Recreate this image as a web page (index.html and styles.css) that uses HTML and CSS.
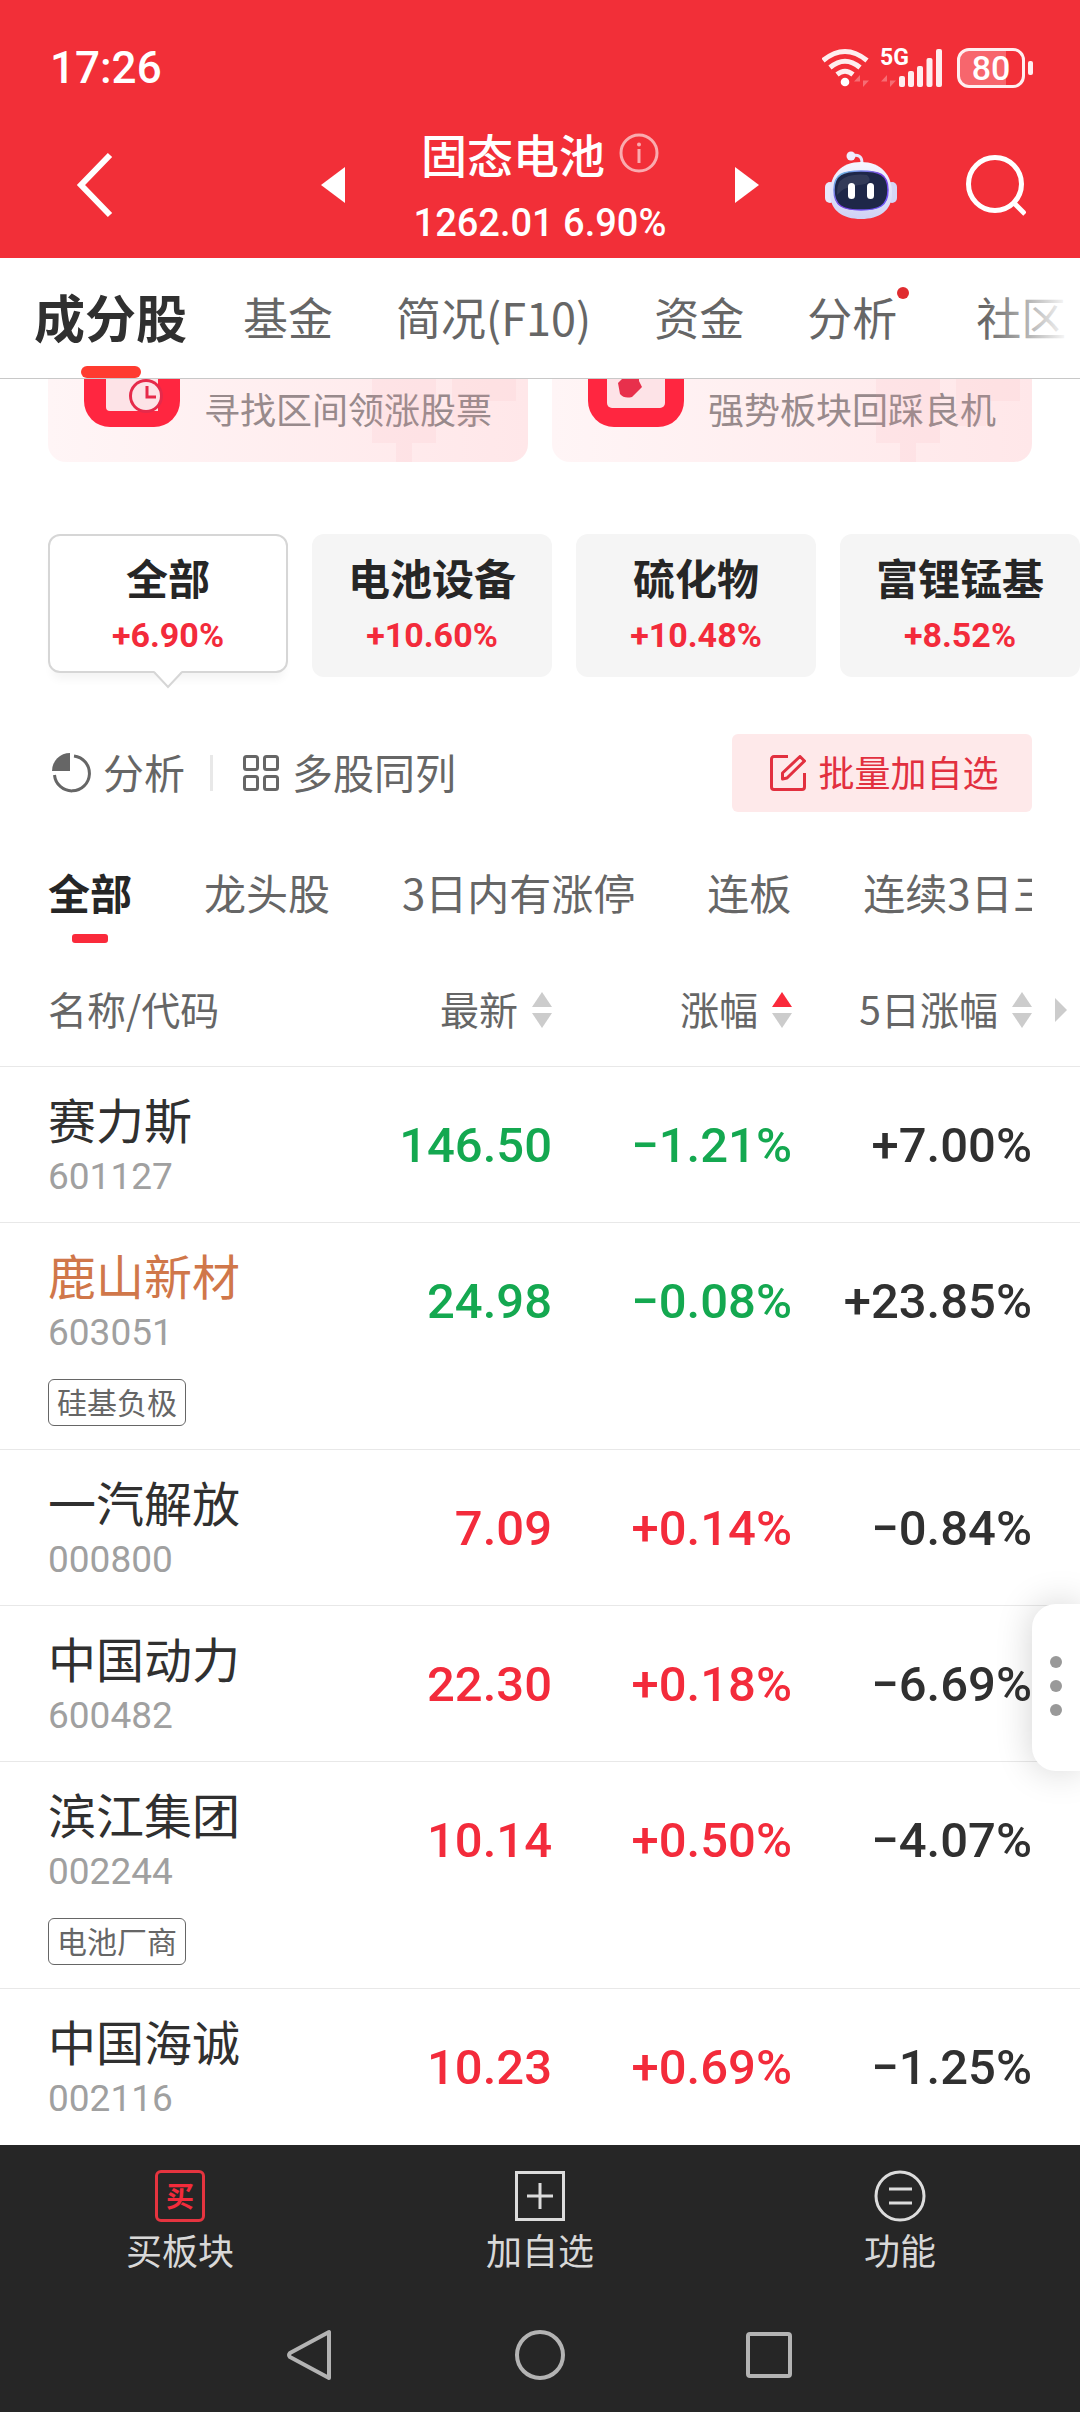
FILE: index.html
```html
<!DOCTYPE html>
<html lang="zh-CN">
<head>
<meta charset="utf-8">
<meta name="viewport" content="width=device-width, initial-scale=1">
<title>固态电池</title>
<link rel="stylesheet" href="styles.css">
</head>
<body>
<header class="top">
  <div class="status">
    <span class="status-time">17:26</span>
    <div class="status-icons">
      <svg width="48" height="40" viewBox="0 0 48 40" fill="none" stroke="#fff" stroke-opacity=".92" stroke-width="5">
        <path d="M1 12.500Q23 -5.500 45 12.500M8 19.500Q23 7 38 19.500M15 26.500Q23 20 31 26.500"/>
        <circle cx="23" cy="34" r="4.300" fill="#fff" stroke="none"/>
        <path d="M38 39V27L32 33.500h6zM41 27v12l6-6.500h-6z" fill="#fff" fill-opacity=".3" stroke="none"/>
      </svg>
      <div class="signal">
        <span class="signal-label">5G</span>
        <svg width="62" height="40" viewBox="0 0 62 40" fill="#fff" fill-opacity=".92">
          <rect x="19" y="28" width="6" height="11" rx="2"/><rect x="28" y="23" width="6" height="16" rx="2"/><rect x="37" y="18" width="6" height="21" rx="2"/><rect x="46.500" y="10" width="6" height="29" rx="2"/><rect x="56" y="1" width="6" height="38" rx="2"/>
          <path d="M7 39V27L1 33.500h6zM10 27v12l6-6.500h-6z" fill-opacity=".3"/>
        </svg>
      </div>
      <div class="battery"><span class="battery-level">80</span></div>
    </div>
  </div>
  <nav class="nav">
    <button class="icon-btn nav-back" aria-label="返回">
      <svg width="38" height="66" viewBox="0 0 38 66" fill="none" stroke="#fff" stroke-width="6"><path d="M34 3L5 33l29 30"/></svg>
    </button>
    <div class="nav-center">
      <button class="icon-btn" aria-label="上一个"><svg width="24" height="36" viewBox="0 0 24 36"><path d="M24 0v36L0 18z" fill="#fff"/></svg></button>
      <div class="nav-title">
        <h1 class="title">固态电池
          <svg width="40" height="40" viewBox="0 0 40 40" fill="none" stroke="#fff" stroke-opacity=".6" stroke-width="3"><circle cx="20" cy="20" r="18"/><path d="M20 16v14"/><circle cx="20" cy="11.500" r="2" fill="#fff" fill-opacity=".6" stroke="none"/></svg>
        </h1>
        <p class="quote">1262.01 6.90%</p>
      </div>
      <button class="icon-btn" aria-label="下一个"><svg width="24" height="36" viewBox="0 0 24 36"><path d="M0 0v36l24-18z" fill="#fff"/></svg></button>
    </div>
    <div class="nav-actions">
      <button class="icon-btn" aria-label="智能助手">
        <svg width="72" height="68" viewBox="0 0 72 68">
          <defs>
            <linearGradient id="shell" x1="0" y1="0" x2="0" y2="1"><stop offset="0" stop-color="#f6f5ff"/><stop offset="1" stop-color="#cfd2f4"/></linearGradient>
            <linearGradient id="rim" x1="0" y1="0" x2="1" y2="1"><stop offset="0" stop-color="#6fd0e8"/><stop offset=".5" stop-color="#7a3fe0"/><stop offset="1" stop-color="#6a5cff"/></linearGradient>
          </defs>
          <path d="M26 5q11-3 11 7" fill="none" stroke="#e9e6fb" stroke-width="3"/>
          <circle cx="26" cy="5" r="4.500" fill="#f0edff"/>
          <rect x="0" y="31" width="10" height="21" rx="5" fill="#e9e8fb"/><rect x="62" y="31" width="10" height="21" rx="5" fill="#d5d6f6"/>
          <path d="M36 11C56 11 67 24 67 42C67 60 54 68 36 68S5 60 5 42C5 24 16 11 36 11z" fill="url(#shell)"/>
          <path d="M36 20C54 20 63 23 63 39S54 59 36 59S9 55 9 39S18 20 36 20z" fill="#1e2748" stroke="url(#rim)" stroke-width="1.500"/>
          <path d="M15 30Q24 22 42 24Q50 32 34 34T12 44Q12 34 15 30z" fill="#fff" fill-opacity=".09"/>
          <rect x="23" y="32" width="7" height="16" rx="3.500" fill="#fff"/><rect x="42" y="32" width="7" height="16" rx="3.500" fill="#fff"/>
        </svg>
      </button>
      <button class="icon-btn" aria-label="搜索">
        <svg width="60" height="62" viewBox="0 0 60 62" fill="none" stroke="#fff" stroke-width="5"><circle cx="29" cy="30" r="26.500"/><path d="M48 49l11 11"/></svg>
      </button>
    </div>
  </nav>
</header>

<nav class="tabs">
  <a class="tab tab-active" href="#stocks">成分股</a>
  <a class="tab" href="#funds">基金</a>
  <a class="tab" href="#profile">简况(F10)</a>
  <a class="tab" href="#capital">资金</a>
  <a class="tab tab-dot" href="#analysis">分析</a>
  <a class="tab" href="#community">社区</a>
</nav>

<main class="content" id="stocks">
  <div class="features">
    <a class="feature" href="#range">
      <svg class="feature-bg" width="150" height="83" viewBox="0 0 150 83" fill="#f8a0aa" fill-opacity=".09"><path d="M0 0h64v64H40v20H24V64H0zM80 0h64v22h-34v25H80z"/></svg>
      <svg width="96" height="48" viewBox="0 0 96 48">
        <path d="M0 0h96v22a26 26 0 0 1-26 26H26A26 26 0 0 1 0 22z" fill="#ff2640"/>
        <path d="M22 0h52v32H26a4 4 0 0 1-4-4z" fill="#fde3e7"/>
        <path d="M74 0h22v22H74z" fill="#ff2640"/>
        <circle cx="62" cy="17" r="17" fill="#e62a4a"/><circle cx="62" cy="17" r="14" fill="#fde3e7"/>
        <path d="M63 7v11h9" fill="none" stroke="#e62a4a" stroke-width="3"/>
      </svg>
      <span>寻找区间领涨股票</span>
    </a>
    <a class="feature" href="#pullback">
      <svg class="feature-bg" width="150" height="83" viewBox="0 0 150 83" fill="#f8a0aa" fill-opacity=".09"><path d="M0 0h64v64H40v20H24V64H0zM80 0h64v22h-34v25H80z"/></svg>
      <svg width="96" height="48" viewBox="0 0 96 48">
        <path d="M0 0h96v22a26 26 0 0 1-26 26H26A26 26 0 0 1 0 22z" fill="#ff2640"/>
        <path d="M19 0h58v24a5 5 0 0 1-5 5H24a5 5 0 0 1-5-5z" fill="#fde3e7"/>
        <path d="M34 0h17v2l3 6-10 10q-8 2-12-3l-2-11z" fill="#e8304c"/>
      </svg>
      <span>强势板块回踩良机</span>
    </a>
  </div>

  <div class="chips">
    <button class="chip chip-active"><span class="chip-name">全部</span><span class="chip-rate">+6.90%</span>
      <svg class="chip-arrow" width="30" height="18" viewBox="0 0 30 18"><path d="M1 0h28L15 15z" fill="#fff"/><path d="M1 1L15 16L29 1" fill="none" stroke="#d6d6d6" stroke-width="2"/></svg>
    </button>
    <button class="chip"><span class="chip-name">电池设备</span><span class="chip-rate">+10.60%</span></button>
    <button class="chip"><span class="chip-name">硫化物</span><span class="chip-rate">+10.48%</span></button>
    <button class="chip"><span class="chip-name">富锂锰基</span><span class="chip-rate">+8.52%</span></button>
  </div>

  <div class="tools">
    <button class="tool">
      <svg width="40" height="40" viewBox="0 0 40 40"><path d="M18 0v18H0A18 18 0 0 1 18 0z" fill="#666"/><path d="M22 3A17.500 17.500 0 1 1 2.500 22" fill="none" stroke="#666" stroke-width="3"/></svg>
      <span class="tool-label">分析</span>
    </button>
    <span class="tool-divider"></span>
    <button class="tool tool-wide">
      <svg width="36" height="36" viewBox="0 0 36 36" fill="none" stroke="#666" stroke-width="3"><rect x="1.500" y="1.500" width="13" height="13" rx="2"/><rect x="21.500" y="1.500" width="13" height="13" rx="2"/><rect x="1.500" y="21.500" width="13" height="13" rx="2"/><rect x="21.500" y="21.500" width="13" height="13" rx="2"/></svg>
      <span class="tool-label">多股同列</span>
    </button>
    <button class="batch">
      <svg width="36" height="36" viewBox="0 0 36 36" fill="none" stroke="#e2303f" stroke-width="3" stroke-linejoin="round"><path d="M18 1.500H4a2.500 2.500 0 0 0-2.500 2.500v28a2.500 2.500 0 0 0 2.500 2.500h28a2.500 2.500 0 0 0 2.500-2.500V18"/><path d="M12.500 24v-6L30 1.500l4.500 4.500L17 23z"/></svg>
      <span class="tool-label">批量加自选</span>
    </button>
  </div>

  <nav class="filters">
    <a class="filter filter-active" href="#all">全部</a>
    <a class="filter" href="#leader">龙头股</a>
    <a class="filter" href="#limit3">3日内有涨停</a>
    <a class="filter" href="#streak">连板</a>
    <a class="filter" href="#three">连续3日三</a>
  </nav>

  <table class="stocks">
    <colgroup><col><col class="col-price"><col class="col-price"><col class="col-last"></colgroup>
    <thead>
      <tr>
        <th scope="col">名称/代码</th>
        <th scope="col"><button class="sort">最新<svg width="20" height="36" viewBox="0 0 20 36" fill="#ccc"><path d="M10 0l10 15H0z"/><path d="M10 36L0 21h20z"/></svg></button></th>
        <th scope="col"><button class="sort">涨幅<svg width="20" height="36" viewBox="0 0 20 36" fill="#ccc"><path d="M10 0l10 15H0z" fill="#fa2a3b"/><path d="M10 36L0 21h20z"/></svg></button></th>
        <th scope="col"><button class="sort">5日涨幅<svg width="20" height="36" viewBox="0 0 20 36" fill="#ccc"><path d="M10 0l10 15H0z"/><path d="M10 36L0 21h20z"/></svg></button><svg class="more" width="12" height="24" viewBox="0 0 12 24"><path d="M0 0v24l12-12z" fill="#ccc"/></svg></th>
      </tr>
    </thead>
    <tbody>
      <tr><td><div class="name">赛力斯</div><div class="code">601127</div></td><td class="down">146.50</td><td class="down">−1.21%</td><td>+7.00%</td></tr>
      <tr><td><div class="name name-held">鹿山新材</div><div class="code">603051</div><span class="tag">硅基负极</span></td><td class="down">24.98</td><td class="down">−0.08%</td><td>+23.85%</td></tr>
      <tr><td><div class="name">一汽解放</div><div class="code">000800</div></td><td class="up">7.09</td><td class="up">+0.14%</td><td>−0.84%</td></tr>
      <tr><td><div class="name">中国动力</div><div class="code">600482</div></td><td class="up">22.30</td><td class="up">+0.18%</td><td>−6.69%</td></tr>
      <tr><td><div class="name">滨江集团</div><div class="code">002244</div><span class="tag">电池厂商</span></td><td class="up">10.14</td><td class="up">+0.50%</td><td>−4.07%</td></tr>
      <tr><td><div class="name">中国海诚</div><div class="code">002116</div></td><td class="up">10.23</td><td class="up">+0.69%</td><td>−1.25%</td></tr>
    </tbody>
  </table>
</main>

<button class="drawer" aria-label="更多"><i></i><i></i><i></i></button>

<footer class="bottom">
  <nav class="actions">
    <button class="action"><span class="buy-icon">买</span>买板块</button>
    <button class="action"><svg width="52" height="52" viewBox="0 0 52 52" fill="none" stroke="#dcdcdc" stroke-width="3"><path d="M2.500 2.500h47v47h-47zM26 13v26M13 26h26"/></svg>加自选</button>
    <button class="action"><svg width="52" height="52" viewBox="0 0 52 52" fill="none" stroke="#dcdcdc" stroke-width="3"><circle cx="26" cy="26" r="24"/><path d="M15 19h23M15 33h23"/></svg>功能</button>
  </nav>
  <nav class="system">
    <button class="icon-btn" aria-label="后退"><svg width="50" height="52" viewBox="0 0 50 52" fill="none" stroke="#b3b3b3" stroke-width="4" stroke-linejoin="round"><path d="M43 3v46L4 28q-2-2 0-4z"/></svg></button>
    <button class="icon-btn" aria-label="主页"><svg width="52" height="52" viewBox="0 0 52 52" fill="none" stroke="#b3b3b3" stroke-width="4"><circle cx="26" cy="26" r="23"/></svg></button>
    <button class="icon-btn" aria-label="最近任务"><svg width="50" height="52" viewBox="0 0 50 52" fill="none" stroke="#b3b3b3" stroke-width="4"><rect x="4" y="5" width="42" height="42" rx="2"/></svg></button>
  </nav>
</footer>
</body>
</html>
```

FILE: styles.css
```css
:root {
  --cjk: "Noto Sans CJK SC", sans-serif;
  --num: Roboto, "Noto Sans CJK SC", sans-serif;
  --red: #f22f38;
  --up: #f32b3b;
  --down: #14a850;
  --ink: #303030;
  --gray: #666;
}

* { box-sizing: border-box; }

body {
  margin: 0;
  min-height: 100vh;
  display: flex;
  flex-direction: column;
  background: #fff;
  color: var(--ink);
  font-family: var(--cjk);
  overflow-x: hidden;
}

button {
  margin: 0;
  padding: 0;
  border: 0;
  background: none;
  color: inherit;
  font: inherit;
}

a { color: inherit; text-decoration: none; }
svg { display: block; flex: none; }
.icon-btn { display: flex; }

/* Header */
.top { background: var(--red); color: #fff; }

.status {
  display: flex;
  justify-content: space-between;
  align-items: center;
  height: 120px;
  padding: 15px 47px 0 50px;
}

.status-time { font: 500 44px/48px var(--num); }
.status-icons { display: flex; align-items: center; gap: 10px; }
.signal { position: relative; }

.signal-label {
  position: absolute;
  left: 0;
  top: 0;
  font: 700 23px/20px var(--num);
}

.battery {
  position: relative;
  display: flex;
  justify-content: center;
  align-items: center;
  width: 68px;
  height: 40px;
  margin: 0 8px 0 5px;
  border: 3px solid #ffeff0;
  border-radius: 12px;
  background: linear-gradient(to right, #f7666d 75%, transparent 75%);
}

.battery::after {
  content: "";
  position: absolute;
  right: -11px;
  top: 10px;
  width: 5px;
  height: 14px;
  border-radius: 2px;
  background: #ffeff0;
}

.battery-level { font: 500 34px/34px var(--num); }

.nav {
  display: grid;
  grid-template-columns: 1fr auto 1fr;
  align-items: center;
  height: 138px;
  padding: 0 54px 8px;
}

.nav-back { margin-left: 22px; }

.nav-center {
  display: flex;
  align-items: center;
  justify-content: space-between;
  width: 438px;
}

.nav-title { display: flex; flex-direction: column; align-items: center; gap: 20px; }

.title {
  display: flex;
  align-items: center;
  gap: 14px;
  margin: 0;
  font-size: 46px;
  font-weight: 500;
  line-height: 56px;
}

.quote { margin: 0; font: 500 38px/44px var(--num); }
.nav-actions { display: flex; justify-content: flex-end; align-items: center; gap: 69px; }

/* Main tabs */
.tabs {
  display: flex;
  gap: 63px;
  height: 121px;
  padding: 0 36px 0 34px;
  border-bottom: 1px solid #c8c8c8;
  overflow: hidden;
  position: relative;
}

.tabs::after {
  content: "";
  position: absolute;
  right: 0;
  top: 0;
  bottom: 0;
  width: 96px;
  background: linear-gradient(to right, transparent, #fff 90%);
}

.tab {
  position: relative;
  flex: none;
  color: var(--gray);
  font-size: 45px;
  line-height: 117px;
}

.tab-active { margin-right: -7px; color: var(--ink); font-size: 51px; font-weight: 700; }

.tab-active::after {
  content: "";
  position: absolute;
  left: 50%;
  bottom: 0;
  width: 60px;
  height: 12px;
  margin-left: -30px;
  border-radius: 6px;
  background: #ff3b30;
}

.tab-dot { margin-right: 16px; }

.tab-dot::after {
  content: "";
  position: absolute;
  right: -12px;
  top: 29px;
  width: 12px;
  height: 12px;
  border-radius: 50%;
  background: #e02c30;
}

.content { flex: 1; }

/* Feature cards */
.features { display: grid; grid-template-columns: 1fr 1fr; gap: 24px; padding: 0 48px; }

.feature {
  position: relative;
  display: flex;
  gap: 24px;
  height: 83px;
  padding-left: 36px;
  border-radius: 0 0 18px 18px;
  background: linear-gradient(to right, #fff5f6, #ffe7e9);
  color: #988a8c;
  font-size: 36px;
  line-height: 58px;
}

.feature-bg { position: absolute; right: 6px; top: 0; }

/* Sector chips */
.chips { display: flex; gap: 24px; padding: 72px 0 18px 48px; overflow: hidden; }

.chip {
  position: relative;
  flex: none;
  display: flex;
  flex-direction: column;
  align-items: center;
  gap: 5px;
  width: 240px;
  height: 143px;
  padding-top: 13px;
  border-radius: 12px;
  background: #f5f5f5;
}

.chip-active {
  height: 139px;
  padding-top: 11px;
  border: 2px solid #d6d6d6;
  background: #fff;
  box-shadow: 0 10px 10px -4px #f4f4f4;
}

.chip-arrow { position: absolute; left: 50%; bottom: -18px; margin-left: -15px; }
.chip-name { font-size: 42px; font-weight: 700; line-height: 60px; color: #262626; }
.chip-rate { font: 700 34px/46px var(--num); color: var(--up); }

/* Tools */
.tools { display: flex; align-items: center; padding: 39px 48px 0 52px; color: var(--gray); }
.tool { display: flex; align-items: center; gap: 11px; font-size: 41px; line-height: 60px; }
.tool-wide { gap: 13px; }
.tool-label { padding-bottom: 5px; }
.tool-divider { width: 3px; height: 36px; margin: 0 30px 0 25px; background: #e8e8e8; }

.batch {
  display: flex;
  align-items: center;
  justify-content: center;
  gap: 12px;
  width: 300px;
  height: 78px;
  margin-left: auto;
  padding-left: 5px;
  border-radius: 6px;
  background: #fee9ea;
  color: #e2303f;
  font-size: 36px;
}

/* Filters */
.filters {
  display: flex;
  gap: 72px;
  margin: 42px 48px 0;
  overflow: hidden;
  color: var(--gray);
  font-size: 42px;
  line-height: 76px;
  white-space: nowrap;
}

.filter { position: relative; flex: none; height: 92px; }
.filter-active { color: #262626; font-weight: 700; }

.filter-active::after {
  content: "";
  position: absolute;
  left: 24px;
  right: 24px;
  bottom: 3px;
  height: 9px;
  border-radius: 3px;
  background: #fa2a3b;
}

/* Stock table */
.stocks { width: 100%; border-spacing: 0; table-layout: fixed; }
.col-price { width: 240px; }
.col-last { width: 288px; }

.stocks th {
  position: relative;
  height: 120px;
  padding: 3px 0 0;
  color: var(--gray);
  font-size: 39px;
  font-weight: 400;
  text-align: right;
}

.stocks th:first-child, .stocks td:first-child { padding-left: 48px; text-align: left; }
.stocks th:last-child, .stocks td:last-child { padding-right: 48px; }

.sort { display: inline-flex; align-items: center; gap: 14px; }
.sort svg { margin-top: 5px; }
.more { position: absolute; right: 13px; top: 52px; }

.stocks td {
  height: 156px;
  padding: 49px 0 0;
  border-top: 1px solid #e8e8e8;
  font: 500 49px/60px var(--num);
  text-align: right;
  vertical-align: top;
  white-space: nowrap;
}

.stocks td:first-child { padding-top: 21px; padding-bottom: 20px; font-family: var(--cjk); font-weight: 400; }
.stocks .up { color: var(--up); }
.stocks .down { color: var(--down); }
.stocks .name { font-size: 48px; line-height: 60px; }
.name-held { color: #d0774a; }
.code { color: #a0a0a0; font-family: var(--num); font-size: 37px; line-height: 54px; padding-top: 2px; }

.tag {
  display: block;
  width: max-content;
  margin: 19px 0 3px;
  padding: 0 8px 3px;
  border: 1px solid #666;
  border-radius: 6px;
  color: var(--gray);
  font-size: 30px;
  line-height: 42px;
}

.stocks td:first-child { padding-bottom: 18px; }
.stocks .tag { margin-bottom: 5px; }

/* Side drawer handle */
.drawer {
  position: fixed;
  right: 0;
  top: 70%;
  display: flex;
  flex-direction: column;
  align-items: center;
  justify-content: center;
  gap: 12px;
  width: 48px;
  height: 167px;
  margin-top: -84px;
  padding-bottom: 3px;
  border-radius: 24px 0 0 24px;
  background: #fff;
  box-shadow: 0 0 36px rgba(0, 0, 0, .18);
}

.drawer i { width: 12px; height: 12px; border-radius: 50%; background: #999; }

/* Bottom */
.bottom { background: #262626; color: #d8d8d8; }
.actions { display: grid; grid-template-columns: 1fr 1fr 1fr; height: 153px; padding-top: 25px; }

.action {
  display: flex;
  flex-direction: column;
  align-items: center;
  font-size: 36px;
  line-height: 54px;
}

.buy-icon {
  width: 50px;
  height: 52px;
  border: 3px solid #e5343f;
  border-radius: 6px;
  color: #f32b3b;
  font-size: 28px;
  font-weight: 700;
  line-height: 44px;
}

.system { display: flex; justify-content: center; gap: 178px; padding: 31px 0; }
```
